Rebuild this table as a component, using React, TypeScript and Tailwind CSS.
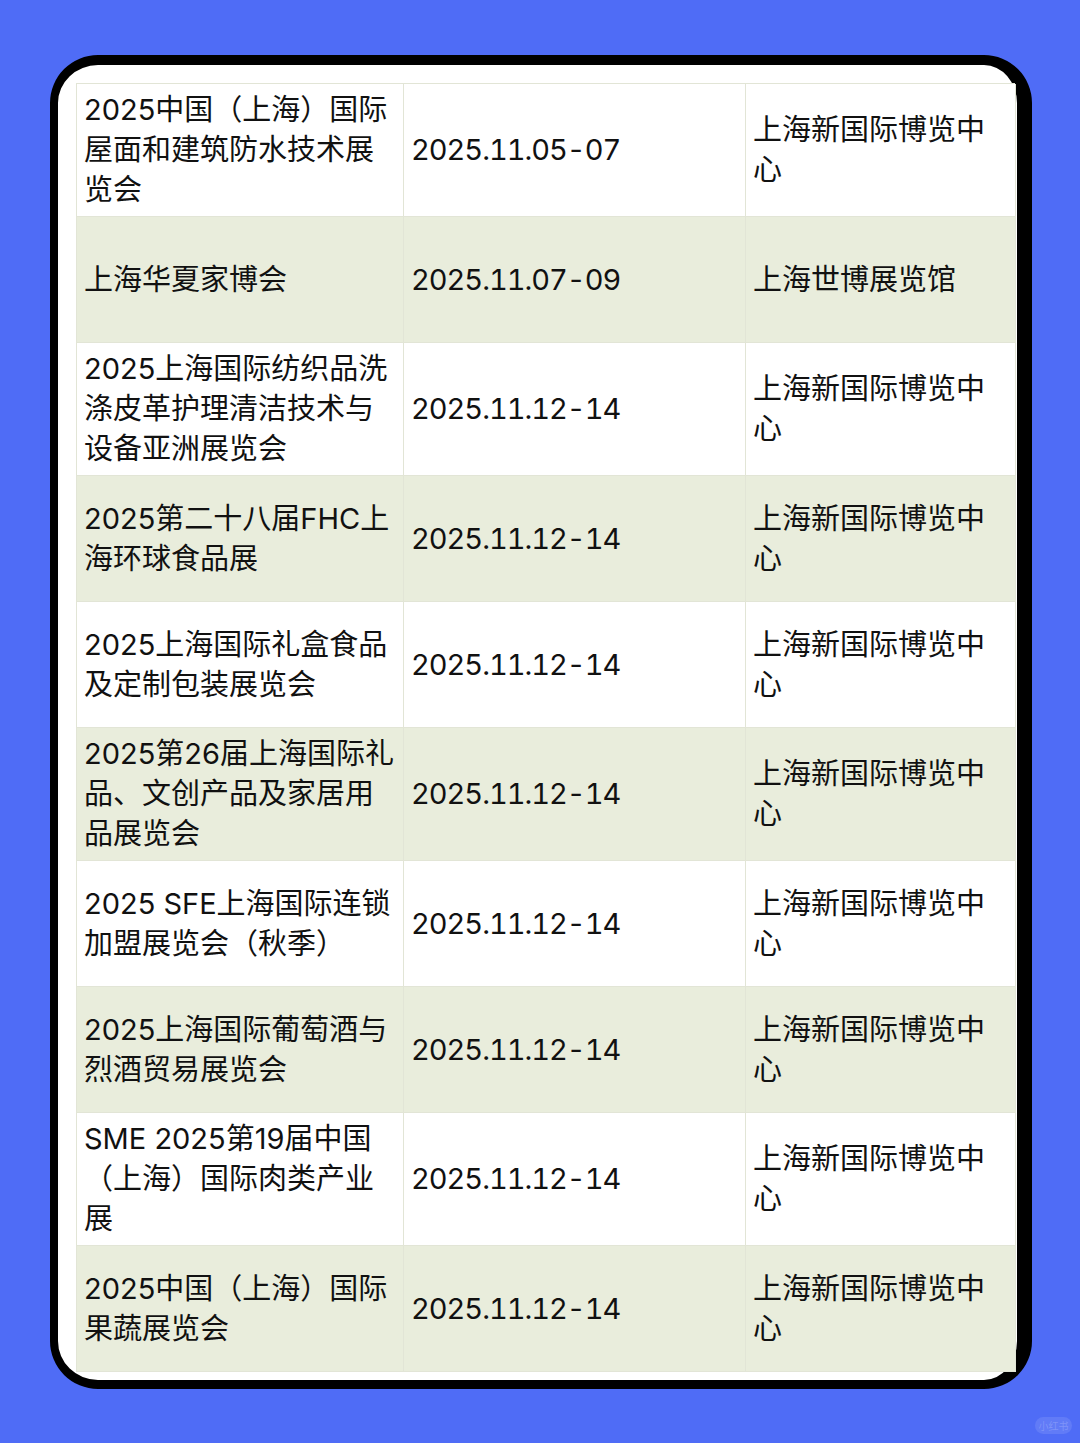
const rows: [string, string, string][] = [
  ["2025中国（上海）国际屋面和建筑防水技术展览会", "2025.11.05-07", "上海新国际博览中心"],
  ["上海华夏家博会", "2025.11.07-09", "上海世博展览馆"],
  ["2025上海国际纺织品洗涤皮革护理清洁技术与设备亚洲展览会", "2025.11.12-14", "上海新国际博览中心"],
  ["2025第二十八届FHC上海环球食品展", "2025.11.12-14", "上海新国际博览中心"],
  ["2025上海国际礼盒食品及定制包装展览会", "2025.11.12-14", "上海新国际博览中心"],
  ["2025第26届上海国际礼品、文创产品及家居用品展览会", "2025.11.12-14", "上海新国际博览中心"],
  ["2025 SFE上海国际连锁加盟展览会（秋季）", "2025.11.12-14", "上海新国际博览中心"],
  ["2025上海国际葡萄酒与烈酒贸易展览会", "2025.11.12-14", "上海新国际博览中心"],
  ["SME 2025第19届中国（上海）国际肉类产业展", "2025.11.12-14", "上海新国际博览中心"],
  ["2025中国（上海）国际果蔬展览会", "2025.11.12-14", "上海新国际博览中心"],
];

export default function App() {
  return (
    <div
      className="relative w-[1080px] h-[1443px] bg-[#4f6cf6] pt-[55px] pl-[50px]"
      style={{ fontFamily: 'Inter, "Noto Sans CJK SC", sans-serif' }}
    >
      <div className="w-[982px] rounded-[48px] bg-white border-black border-t-[10px] border-l-[8px] border-r-[15px] border-b-[9px] pt-[18px] pl-[18px] pb-[8px]">
        <div className="w-[939px] border-t border-l border-[#e2e5d6] text-[29px] leading-[40px] text-[#111111]">
          {rows.map((r, i) => (
            <div
              key={i}
              className={`grid grid-cols-[327px_342px_270px] min-h-[126px] ${
                i % 2 === 1 ? "bg-[#e9eddc]" : "bg-white"
              }`}
            >
              <div className="flex items-center px-[7px] py-[6px] border-r border-b border-[#e2e5d6]">
                <span>{r[0]}</span>
              </div>
              <div className="flex items-center px-[7px] py-[6px] border-r border-b border-[#e2e5d6]">
                <span className="tabular-nums tracking-[-0.035em]">{r[1]}</span>
              </div>
              <div className="flex items-center px-[7px] py-[6px] border-r border-b border-[#e2e5d6]">
                <span>{r[2]}</span>
              </div>
            </div>
          ))}
        </div>
      </div>
      <div className="absolute left-[1035px] top-[1417px] w-[37px] h-[17px] rounded-full bg-white/10 flex items-center justify-center text-[10px] leading-none text-white/20">
        小红书
      </div>
    </div>
  );
}
